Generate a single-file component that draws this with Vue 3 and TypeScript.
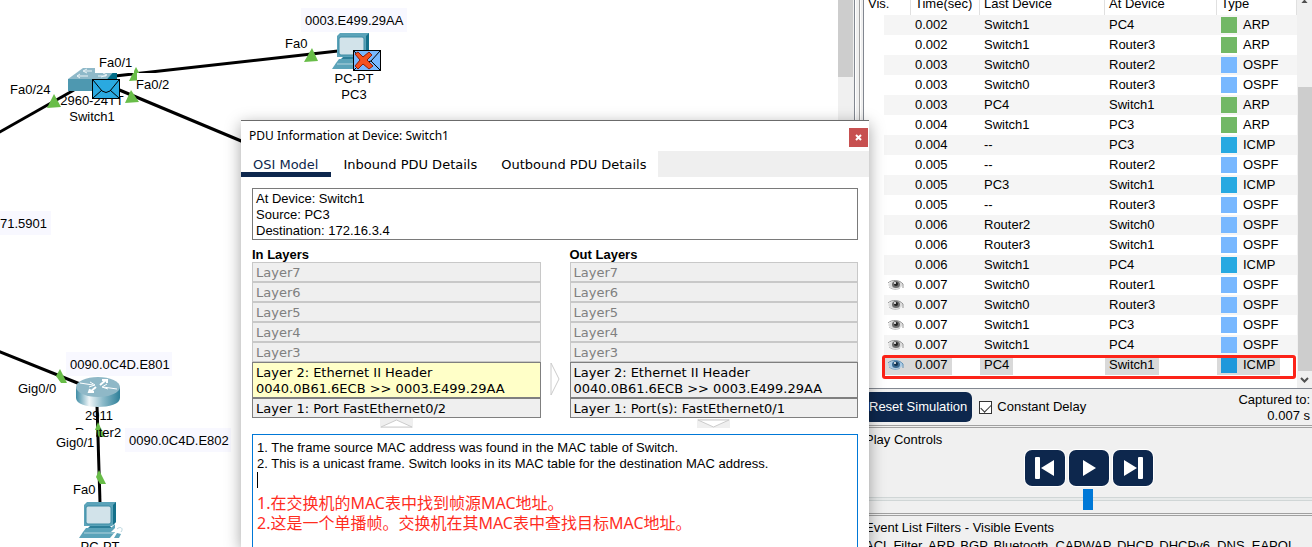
<script setup lang="ts">
import { ref } from 'vue'

type Proto = 'ARP' | 'OSPF' | 'ICMP'

interface SimEvent {
  visible: boolean
  time: string
  last: string
  at: string
  type: Proto
  selected?: boolean
}

interface Layer {
  lines: string[]
  state: 'idle' | 'used' | 'active'
}

const ev = (time: string, last: string, at: string, type: Proto, visible = false, selected = false): SimEvent => ({
  visible, time, last, at, type, selected,
})

const events: SimEvent[] = [
  ev('0.002', 'Switch1', 'PC4', 'ARP'),
  ev('0.002', 'Switch1', 'Router3', 'ARP'),
  ev('0.003', 'Switch0', 'Router2', 'OSPF'),
  ev('0.003', 'Switch0', 'Router3', 'OSPF'),
  ev('0.003', 'PC4', 'Switch1', 'ARP'),
  ev('0.004', 'Switch1', 'PC3', 'ARP'),
  ev('0.004', '--', 'PC3', 'ICMP'),
  ev('0.005', '--', 'Router2', 'OSPF'),
  ev('0.005', 'PC3', 'Switch1', 'ICMP'),
  ev('0.005', '--', 'Router3', 'OSPF'),
  ev('0.006', 'Router2', 'Switch0', 'OSPF'),
  ev('0.006', 'Router3', 'Switch1', 'OSPF'),
  ev('0.006', 'Switch1', 'PC4', 'ICMP'),
  ev('0.007', 'Switch0', 'Router1', 'OSPF', true),
  ev('0.007', 'Switch0', 'Router3', 'OSPF', true),
  ev('0.007', 'Switch1', 'PC3', 'OSPF', true),
  ev('0.007', 'Switch1', 'PC4', 'OSPF', true),
  ev('0.007', 'PC4', 'Switch1', 'ICMP', true, true),
]

const idle: Layer[] = [7, 6, 5, 4, 3].map((n) => ({ lines: [`Layer${n}`], state: 'idle' }))
const header = ['Layer 2: Ethernet II Header', '0040.0B61.6ECB >> 0003.E499.29AA']
const inLayers: Layer[] = [
  ...idle,
  { lines: header, state: 'active' },
  { lines: ['Layer 1: Port FastEthernet0/2'], state: 'used' },
]
const outLayers: Layer[] = [
  ...idle,
  { lines: header, state: 'used' },
  { lines: ['Layer 1: Port(s): FastEthernet0/1'], state: 'used' },
]

const tabs = ['OSI Model', 'Inbound PDU Details', 'Outbound PDU Details']
const activeTab = ref(0)
const constantDelay = ref(true)
const speed = ref(50)
</script>

<template>
  <div class="app">
    <main class="workspace">
      <svg class="topology" width="838" height="547" aria-label="Network topology">
        <defs>
          <linearGradient id="routerSide" x1="0" x2="1" y1="0" y2="0">
            <stop offset="0" stop-color="#3f8ca5" />
            <stop offset="0.3" stop-color="#f0f6f8" />
            <stop offset="0.6" stop-color="#8fbccb" />
            <stop offset="1" stop-color="#2f8099" />
          </linearGradient>
          <symbol id="pc" viewBox="0 0 46 38" overflow="visible">
            <path d="M5 3 L8 0 H37 V20 L33 24 H5 Z" fill="#5ba3b9" />
            <path d="M34 3 L37 0 V20 L34 23 Z" fill="#14708a" />
            <rect x="7" y="4" width="25" height="18" rx="2" fill="#d2e3ea" stroke="#3c8ba4" />
            <path d="M11 24 H31 L34 27 H8 Z" fill="#2c7f99" />
            <path d="M7 26 H32 L36 22 V26 L32 30 H4 Z" fill="#5ba3b9" />
            <path d="M4 30 H36 L31 36 H0 Z" fill="#5ba3b9" />
            <path d="M5 31 H35" stroke="#b4d4de" fill="none" />
            <path d="M35 36 L38 31 L42 32 L40 36 Z" fill="#5ba3b9" />
            <path d="M38 27 C41 24 45 26 42 30" stroke="#b8d5de" fill="none" />
          </symbol>
        </defs>

        <g stroke="#000" stroke-width="3" fill="none">
          <path d="M-2 133 L74 90" />
          <path d="M115 76 L338 51" />
          <path d="M117 89 L246 143" />
          <path d="M-2 351 L80 384" />
          <path d="M97 405 L100 503" />
        </g>

        <g fill="#68bd48">
          <path d="M54 94 L61 107 L47 108 Z" />
          <path d="M136 67 L143 80 L129 81 Z" />
          <path d="M131 90 L139 102 L125 103 Z" />
          <path d="M312 48 L318 61 L304 62 Z" />
          <path d="M60 369 L56 376 L61 383 H67 Z" />
          <path d="M98 422 L95 430 L99 437 H105 Z" />
          <path d="M99 470 L96 477 L100 484 H106 Z" />
        </g>

        <g>
          <path d="M68 79 L83 68 H117 L107 79 Z" fill="#8fb9c9" />
          <path d="M107 79 L117 68 V80 L107 91 Z" fill="#006c87" />
          <rect x="68" y="79" width="39" height="12" fill="#4e98b0" />
          <path d="M92 71 H84 M87 69 L83 71 L87 73 M77 76 H88 M80 74 L77 76 L80 78 M98 76 H106 M103 73 L107 75 L101 77" stroke="#eaf3f6" fill="none" />
        </g>
        <use href="#pc" x="332" y="33" width="46" height="38" />
        <use href="#pc" x="79" y="502" width="46" height="38" />

        <g>
          <path d="M76 387 V398 C76 410 120 410 120 398 V387 Z" fill="url(#routerSide)" />
          <ellipse cx="98" cy="387" rx="22" ry="10" fill="#8fb8c7" />
          <path d="M80 383 L93 385 M90 382 L95 385 L89 387 M117 389 L103 387 M107 384 L102 387 L108 389" stroke="#fff" fill="none" />
          <path d="M100 385 L106 380 M102 380 H107 V383 M96 387 L90 392 M90 389 L89 392 H94" stroke="#fff" stroke-width="2" fill="none" />
        </g>

        <g fill="#f8f8ff">
          <rect x="301" y="8" width="106" height="24" />
          <rect x="0" y="211" width="51" height="24" />
          <rect x="66" y="352" width="106" height="24" />
          <rect x="125" y="428" width="106" height="24" />
        </g>

        <g class="label">
          <text x="92" y="105" text-anchor="middle">2960-24TT</text>
          <text x="92" y="121" text-anchor="middle">Switch1</text>
          <text x="354" y="83" text-anchor="middle">PC-PT</text>
          <text x="354" y="99" text-anchor="middle">PC3</text>
          <text x="99" y="420" text-anchor="middle">2911</text>
          <text x="98" y="437" text-anchor="middle">Router2</text>
          <text x="100" y="551" text-anchor="middle">PC-PT</text>
          <rect x="95" y="54" width="39" height="19" fill="#fff" />
          <rect x="137" y="73" width="35" height="19" fill="#fff" />
          <rect x="54" y="430" width="42" height="20" fill="#fff" />
          <text x="10" y="94">Fa0/24</text>
          <text x="99" y="67">Fa0/1</text>
          <text x="136" y="89">Fa0/2</text>
          <text x="285" y="48">Fa0</text>
          <text x="305" y="25">0003.E499.29AA</text>
          <text x="47" y="228" text-anchor="end">071.5901</text>
          <text x="70" y="369">0090.0C4D.E801</text>
          <text x="18" y="393">Gig0/0</text>
          <text x="56" y="447">Gig0/1</text>
          <text x="129" y="445">0090.0C4D.E802</text>
          <text x="73" y="494">Fa0</text>
        </g>

        <g stroke="#000" fill="none">
          <rect x="92.5" y="79.5" width="27" height="19" fill="#2aa9e0" />
          <path d="M93 80 L102 91 Q106 94 110 91 L119 80 M93 98 L102 90 M119 98 L110 90" />
          <rect x="353.5" y="50.5" width="27" height="20" fill="#78b8ff" />
          <path d="M354 51 L363 61 Q367 64 371 61 L380 51 M354 70 L363 61 M380 70 L371 61" />
          <path d="M355 54 L358 52 L363 57 L369 52 L372 55 L367 60 L373 66 L369 69 L363 64 L358 69 L355 66 L360 60 Z" fill="#f4511e" stroke="#8c1d08" />
        </g>
      </svg>
    </main>
    <div class="vscroll canvas-scroll"><div class="thumb"></div></div>
    <div class="splitter"></div>

    <aside class="side">
      <section class="events">
        <div class="table-wrap">
          <table>
            <colgroup>
              <col class="c-vis" /><col class="c-time" /><col class="c-last" /><col class="c-at" /><col class="c-type" />
            </colgroup>
            <thead>
              <tr><th>Vis.</th><th>Time(sec)</th><th>Last Device</th><th>At Device</th><th>Type</th></tr>
            </thead>
            <tbody>
              <tr v-for="(e, i) in events" :key="i" :class="{ selected: e.selected }">
                <td class="vis">
                  <svg v-if="e.visible" width="17" height="12" viewBox="0 0 17 12">
                    <path d="M1 6 C4 1 12 0 16 5 C15 10 6 12 1 6 Z" :fill="e.selected ? '#a9cbe6' : '#dcdcdc'" />
                    <path d="M1 4 C5 0 13 1 16 5 V9" :stroke="e.selected ? '#5e8fb5' : '#969696'" fill="none" />
                    <path d="M2 8 C6 11 10 11 13 9" :stroke="e.selected ? '#7fa9c9' : '#bbb'" fill="none" />
                    <ellipse cx="9" cy="5.5" rx="4" ry="3.5" :fill="e.selected ? '#39688f' : '#6e6e6e'" />
                    <circle cx="9" cy="5" r="2" :fill="e.selected ? '#12304c' : '#222'" />
                    <circle cx="8" cy="4" r="1" fill="#fff" />
                  </svg>
                </td>
                <td><span class="val">{{ e.time }}</span></td>
                <td><span class="val">{{ e.last }}</span></td>
                <td><span class="val">{{ e.at }}</span></td>
                <td class="type"><span class="val"><i class="swatch" :class="e.type.toLowerCase()"></i>{{ e.type }}</span></td>
              </tr>
            </tbody>
          </table>
        </div>
        <div class="vscroll list-scroll">
          <svg class="arrow up" width="9" height="6"><path d="M1 5 L4.5 1 L8 5" /></svg>
          <div class="thumb"></div>
          <svg class="arrow" width="9" height="6"><path d="M1 1 L4.5 4.5 L8 1" /></svg>
        </div>
        <div class="highlight"></div>
      </section>

      <section class="sim-bar">
        <button class="reset" type="button">Reset Simulation</button>
        <label class="delay"><input v-model="constantDelay" type="checkbox" />Constant Delay</label>
        <div class="captured">Captured to:<br />0.007 s</div>
      </section>

      <section class="play">
        <label for="speed">Play Controls</label>
        <div class="buttons">
          <button type="button" aria-label="Back">
            <svg width="20" height="24"><rect x="0" y="1" width="5" height="22" rx="1" /><path d="M19 4 V20 L6 12 Z" /></svg>
          </button>
          <button type="button" aria-label="Play">
            <svg width="20" height="24"><path d="M4 4 V20 L17 12 Z" /></svg>
          </button>
          <button type="button" aria-label="Forward">
            <svg width="20" height="24"><path d="M1 4 V20 L14 12 Z" /><rect x="15" y="1" width="5" height="22" rx="1" /></svg>
          </button>
        </div>
        <input id="speed" v-model="speed" type="range" min="0" max="100" />
      </section>

      <section class="filters">
        <div>Event List Filters - Visible Events</div>
        <div class="protocols">ACL Filter, ARP, BGP, Bluetooth, CAPWAP, DHCP, DHCPv6, DNS, EAPOL,</div>
      </section>
    </aside>

    <div class="dialog" role="dialog" aria-labelledby="pdu-title">
      <header>
        <span id="pdu-title">PDU Information at Device: Switch1</span>
        <button type="button" aria-label="Close">
          <svg width="7" height="7"><path d="M1 1 L6 6 M6 1 L1 6" stroke="#fff" stroke-width="2" /></svg>
        </button>
      </header>
      <nav role="tablist">
        <button
          v-for="(t, i) in tabs" :key="t" type="button" role="tab"
          :aria-selected="activeTab === i" :class="{ active: activeTab === i }" @click="activeTab = i"
        >{{ t }}</button>
      </nav>
      <div class="body">
        <div class="info">At Device: Switch1<br />Source: PC3<br />Destination: 172.16.3.4</div>
        <div class="stacks">
          <div class="stack">
            <h2>In Layers</h2>
            <button v-for="l in inLayers" :key="l.lines[0]" type="button" class="layer" :class="l.state" :disabled="l.state === 'idle'">
              <span v-for="s in l.lines" :key="s">{{ s }}</span>
            </button>
            <svg class="hint" width="33" height="10"><rect width="33" height="10" fill="#efefef" /><path d="M1 9 L16.5 2 L32 9 Z" /></svg>
          </div>
          <svg class="next" width="11" height="34"><path d="M1 1 L9 17 L1 33 Z" fill="#fff" stroke="#ccc" /></svg>
          <div class="stack">
            <h2>Out Layers</h2>
            <button v-for="l in outLayers" :key="l.lines[0]" type="button" class="layer" :class="l.state" :disabled="l.state === 'idle'">
              <span v-for="s in l.lines" :key="s">{{ s }}</span>
            </button>
            <svg class="hint" width="33" height="10"><rect width="33" height="10" y="1" fill="#efefef" /><path d="M1 2 H32 L16.5 9 Z" /></svg>
          </div>
        </div>
        <div class="notes">
          <div>1. The frame source MAC address was found in the MAC table of Switch.</div>
          <div>2. This is a unicast frame. Switch looks in its MAC table for the destination MAC address.</div>
          <div class="caret"></div>
          <div class="zh" lang="zh">1.在交换机的MAC表中找到帧源MAC地址。<br />2.这是一个单播帧。交换机在其MAC表中查找目标MAC地址。</div>
        </div>
      </div>
    </div>
  </div>
</template>

<style>
body {
  margin: 0;
  overflow: hidden;
}
</style>

<style scoped>
* {
  box-sizing: border-box;
}
.app {
  position: relative;
  display: flex;
  height: 100vh;
  overflow: hidden;
  background: #fff;
  color: #000;
  font: 13px/16px "Liberation Sans", Arial, sans-serif;
}
button,
input {
  font: inherit;
  margin: 0;
}
.workspace {
  flex: 1;
  min-width: 0;
  overflow: hidden;
}
.topology {
  display: block;
}
.label {
  font-size: 13px;
}
.vscroll {
  flex: none;
  width: 15px;
  background: #f0f0f0;
}
.canvas-scroll .thumb {
  height: 77px;
  background: #cdcdcd;
}
.splitter {
  flex: none;
  width: 11px;
  background: linear-gradient(90deg, #f0f0f0 1px, #828790 1px 2px, #fff 2px 3px, #f0f0f0 3px 6px, #a0a0a0 6px 7px, #fff 7px 8px, #f0f0f0 8px 10px, #828790 10px);
}
.side {
  flex: none;
  display: flex;
  flex-direction: column;
  width: 448px;
  background: #f0f0f0;
}

.events {
  position: relative;
  display: flex;
  height: 389px;
  flex: none;
  overflow: hidden;
  border-bottom: 1px solid #828790;
  background: #fff;
}
.table-wrap {
  flex: 1;
  overflow: hidden;
}
table {
  width: 100%;
  margin-top: -7px;
  border-collapse: separate;
  border-spacing: 0;
  table-layout: fixed;
}
.c-vis { width: 47px; }
.c-time { width: 69px; }
.c-last { width: 125px; }
.c-at { width: 112px; }
th {
  height: 22px;
  padding: 0 4px;
  border-right: 1px solid #e0e0e0;
  font-weight: normal;
  text-align: left;
}
td {
  height: 20px;
  padding: 0;
  white-space: nowrap;
}
tbody tr:nth-child(odd) td {
  background: #f5f5f5;
}
tbody tr:nth-child(odd) td.vis {
  background: linear-gradient(90deg, #fff 20px, #f5f5f5 20px);
}
.vis {
  padding-left: 23px;
}
.vis svg {
  display: block;
}
.val {
  display: inline-flex;
  align-items: center;
  height: 20px;
  padding: 0 4px;
  vertical-align: top;
}
.selected .val {
  background: #d9d9d9;
}
tbody tr.selected td.vis {
  background: linear-gradient(90deg, #fff 20px, #d9d9d9 20px);
}
.swatch {
  width: 16px;
  height: 16px;
  margin-right: 6px;
}
.arp { background: #72b866; }
.ospf { background: #78b8ff; }
.icmp { background: #27a9e1; }
.selected .icmp { background: #1e98db; }
.list-scroll {
  display: flex;
  flex-direction: column;
  align-items: center;
}
.list-scroll .thumb {
  width: 14px;
  height: 284px;
  margin: 84px 0 6px;
  background: #cdcdcd;
}
.arrow {
  flex: none;
  fill: none;
  stroke: #505050;
  stroke-width: 2;
}
.arrow.up {
  height: 3px;
}
.highlight {
  position: absolute;
  top: 355px;
  left: 18px;
  right: 16px;
  height: 24px;
  border: 3px solid #fc2318;
  border-radius: 3px;
}

.sim-bar {
  display: flex;
  align-items: center;
  height: 36px;
  flex: none;
}
.reset {
  height: 30px;
  padding: 0 5px;
  border: 0;
  border-radius: 6px;
  background: #0d274d;
  color: #fff;
}
.delay {
  display: flex;
  align-items: center;
  margin-left: 7px;
}
.delay input {
  appearance: none;
  width: 13px;
  height: 13px;
  margin-right: 5px;
  border: 1px solid #333;
  background: #fff;
}
.delay input:checked::before {
  content: "";
  display: block;
  width: 9px;
  height: 5px;
  margin: 2px 0 0 1px;
  border: solid #333;
  border-width: 0 0 1px 1px;
  transform: rotate(-45deg);
}
.captured {
  margin-left: auto;
  padding: 1px 2px 0 0;
  text-align: right;
}
.play,
.filters {
  border-top: 3px double #a0a0a0;
}
.play {
  height: 88px;
  flex: none;
}
.play label {
  display: block;
  padding: 4px 1px 2px;
}
.buttons {
  display: flex;
  justify-content: center;
  gap: 4px;
  padding-left: 2px;
}
.buttons button {
  display: flex;
  align-items: center;
  justify-content: center;
  width: 40px;
  height: 36px;
  padding: 0;
  border: 0;
  border-radius: 7px;
  background: #0d274d;
  box-shadow: 0 0 0 1px #fff;
}
.buttons svg {
  fill: #fff;
}
#speed {
  appearance: none;
  display: block;
  width: 100%;
  height: 21px;
  margin-top: 3px;
  background: linear-gradient(#0000 8px, #d0d6d6 8px 9px, #e7eaea 9px 11px, #d0d6d6 11px 12px, #0000 12px);
}
#speed::-webkit-slider-thumb {
  appearance: none;
  width: 10px;
  height: 21px;
  border: 0;
  border-radius: 0;
  background: #0078d7;
}
.filters {
  padding: 4px 1px 0;
  white-space: nowrap;
}
.protocols {
  margin-top: 2px;
}

.dialog {
  position: absolute;
  top: 120px;
  bottom: 0;
  left: 241px;
  display: flex;
  flex-direction: column;
  width: 628px;
  border-top: 1px solid #6b6b6b;
  background: #fff;
  box-shadow: 0 4px 15px rgba(0, 0, 0, 0.36);
}
.dialog header {
  display: flex;
  align-items: center;
  justify-content: space-between;
  height: 30px;
  flex: none;
  padding: 0 1px 0 8px;
  font: 12px/16px "Noto Sans", "Open Sans", sans-serif;
}
.dialog header button {
  display: flex;
  align-items: center;
  justify-content: center;
  width: 19px;
  height: 19px;
  margin-top: 3px;
  padding: 0;
  border: 0;
  background: #c75050;
}
nav {
  display: flex;
  height: 26px;
  flex: none;
  background: #efefef;
}
nav button {
  padding: 2px 12px 0;
  border: 0;
  background: #fff;
  color: #000;
  font: 13px/16px "DejaVu Sans", Verdana, sans-serif;
}
nav button.active {
  padding-right: 13px;
  color: #0d274d;
  box-shadow: inset 0 -5px #0d274d;
}
.body {
  display: flex;
  flex: 1;
  flex-direction: column;
  min-height: 0;
  padding: 11px 11px 0;
}
.info {
  padding: 2px 3px 0;
  border: 1px solid #7a7a7a;
}
.stacks {
  display: flex;
  margin-top: 6px;
}
.stack {
  display: flex;
  flex: 1;
  flex-direction: column;
}
h2 {
  margin: 0;
  padding-top: 1px;
  font-size: 13px;
  line-height: 15px;
}
.layer {
  display: flex;
  flex-direction: column;
  padding: 2px 3px 0;
  border: 1px solid #7f7f7f;
  background: #efefef;
  color: #000;
  font: 13px/16px "DejaVu Sans", Verdana, sans-serif;
  text-align: left;
}
.layer.idle {
  border-color: #c8c8c8;
  color: #808080;
}
.layer.active {
  background: #ffffc8;
}
.hint {
  align-self: center;
}
.hint path {
  fill: #fff;
  stroke: #ccc;
}
.next {
  flex: none;
  margin: 116px 9px 0;
}
.notes {
  flex: 1;
  margin-top: 6px;
  padding: 5px 4px;
  border: 1px solid #0078d7;
  border-bottom: 0;
}
.caret {
  width: 1px;
  height: 16px;
  background: #000;
}
.zh {
  margin-top: 5px;
  color: #ff2d1f;
  font: 16px/20px "Noto Sans", "Noto Sans CJK SC", sans-serif;
}
</style>
